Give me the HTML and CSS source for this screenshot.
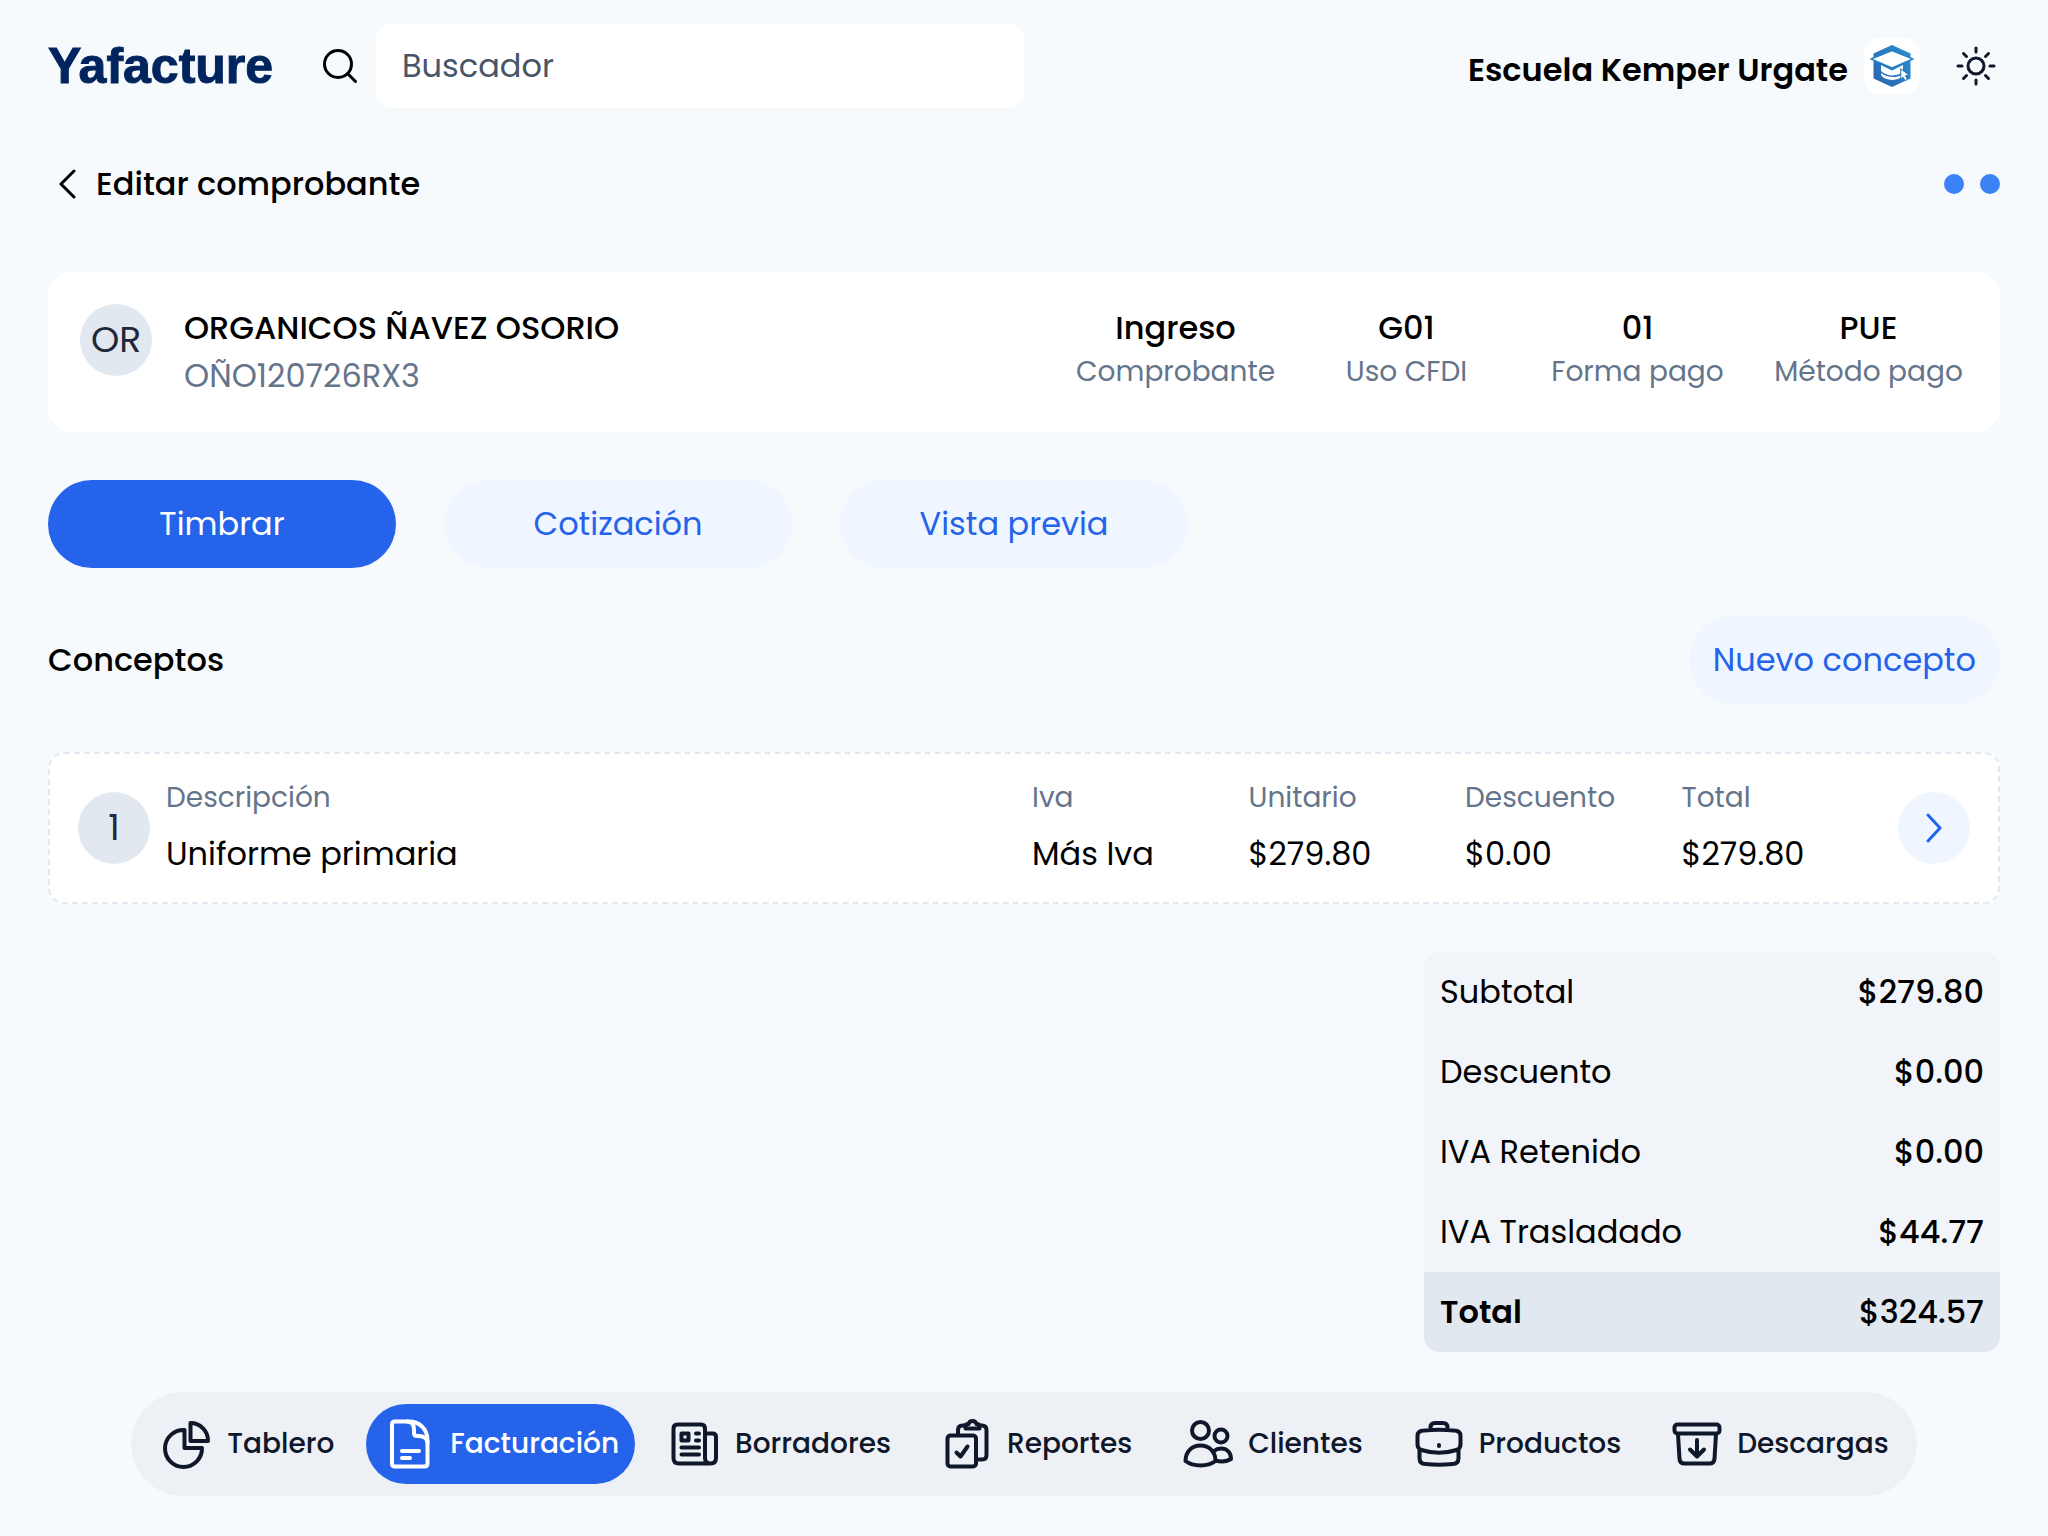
FILE: index.html
```html
<!DOCTYPE html>
<html lang="es">
<head>
<meta charset="utf-8">
<meta name="viewport" content="width=device-width, initial-scale=1">
<title>Yafacture</title>
<link rel="stylesheet" href="styles.css">
</head>
<body>
<header class="topbar">
  <a class="brand" href="#">Yafacture</a>
  <form class="search">
    <label class="search-label" for="q" aria-label="Buscador">
      <svg class="icon-search" viewBox="0 0 36 36"><circle cx="16" cy="16" r="13.5"/><path d="M26 26l7.500 7.500"/></svg>
    </label>
    <input class="search-input" id="q" type="text" placeholder="Buscador">
  </form>
  <div class="account">
    <span class="account-name">Escuela Kemper Urgate</span>
    <span class="account-logo">
      <svg viewBox="0 0 56 56">
        <defs><linearGradient id="hex" x1="1" y1="0" x2="0" y2="1"><stop offset="0" stop-color="#2793d1"/><stop offset="1" stop-color="#2a62ad"/></linearGradient></defs>
        <path fill="url(#hex)" d="M28 7l18.500 8.500v25L28 49 9.500 40.500v-25z"/>
        <path fill="#fff" stroke="#2a80c2" stroke-width="1.500" d="M28 12.500l21 8.500-21 9L7 21z"/>
        <path fill="#fff" d="M17 27l11 5.500L39 27v5l-2.500-1.500 1 4.500c-6 3.500-15 3.500-20.500-2z"/>
        <path fill="#fff" d="M17 35c6 5 15 5 21 2l1 1.500c-7 5-18 4.500-22-1.500z"/>
        <path fill="#fff" stroke="#2a76bb" stroke-width="1" d="M37 31l8 6-3.500.8 2 3.500-2.500 1.200-2-3.300-2 2z"/>
      </svg>
    </span>
    <button class="icon-button" type="button" aria-label="Tema">
      <svg class="icon-sun" viewBox="0 0 40 40"><circle cx="20" cy="20" r="8"/><path d="M20 2v4M20 34v4M2 20h4M34 20h4M7.500 7.500l3 3M29.500 29.500l3 3M7.500 32.500l3-3M29.500 10.500l3-3"/></svg>
    </button>
  </div>
</header>

<main class="content">
  <div class="page-head">
    <a class="back" href="#">
      <svg class="icon-back" viewBox="0 0 18 32"><path d="M16 3L3 16l13 13"/></svg>
      <h1 class="title">Editar comprobante</h1>
    </a>
    <button class="more" type="button" aria-label="Más opciones"><span class="dot"></span><span class="dot"></span></button>
  </div>

  <section class="client">
    <span class="badge">OR</span>
    <div class="client-id">
      <strong class="strong">ORGANICOS ÑAVEZ OSORIO</strong>
      <span class="rfc">OÑO120726RX3</span>
    </div>
    <div class="facts">
      <div class="fact"><strong class="strong">Ingreso</strong><span class="caption">Comprobante</span></div>
      <div class="fact"><strong class="strong">G01</strong><span class="caption">Uso CFDI</span></div>
      <div class="fact"><strong class="strong">01</strong><span class="caption">Forma pago</span></div>
      <div class="fact"><strong class="strong">PUE</strong><span class="caption">Método pago</span></div>
    </div>
  </section>

  <div class="actions">
    <button class="button button-wide button-primary" type="button">Timbrar</button>
    <button class="button button-wide" type="button">Cotización</button>
    <button class="button button-wide" type="button">Vista previa</button>
  </div>

  <div class="section-head">
    <h2 class="title">Conceptos</h2>
    <button class="button" type="button">Nuevo concepto</button>
  </div>

  <article class="concept">
    <span class="badge">1</span>
    <dl class="fields">
      <div class="field field-main"><dt class="caption">Descripción</dt><dd class="value">Uniforme primaria</dd></div>
      <div class="field"><dt class="caption">Iva</dt><dd class="value">Más Iva</dd></div>
      <div class="field"><dt class="caption">Unitario</dt><dd class="value">$279.80</dd></div>
      <div class="field"><dt class="caption">Descuento</dt><dd class="value">$0.00</dd></div>
      <div class="field"><dt class="caption">Total</dt><dd class="value">$279.80</dd></div>
    </dl>
    <button class="open" type="button" aria-label="Abrir concepto">
      <svg class="icon-open" viewBox="0 0 18 30"><path d="M3 2l12 13L3 28"/></svg>
    </button>
  </article>

  <table class="totals">
    <tbody>
      <tr><th scope="row">Subtotal</th><td>$279.80</td></tr>
      <tr><th scope="row">Descuento</th><td>$0.00</td></tr>
      <tr><th scope="row">IVA Retenido</th><td>$0.00</td></tr>
      <tr><th scope="row">IVA Trasladado</th><td>$44.77</td></tr>
    </tbody>
    <tfoot>
      <tr><th scope="row">Total</th><td>$324.57</td></tr>
    </tfoot>
  </table>
</main>

<nav class="dock">
  <a class="dock-item" href="#">
    <svg class="dock-icon" viewBox="0 0 48 48"><path d="M27.500 3V21H45A17.500 17.500 0 0 0 27.500 3z"/><path d="M21.500 10v18H39A18.500 18.500 0 1 1 21.500 10z"/></svg>
    Tablero</a>
  <a class="dock-item dock-item-active" href="#" aria-current="page">
    <svg class="dock-icon" viewBox="0 0 48 48"><path d="M9 1.500h14c11 0 18.500 8 18.500 19V43.500q0 3-3 3H9q-3 0-3-3v-39q0-3 3-3z"/><path d="M21 1.500c5 0 7 3 7 8V13q0 3 3 3h2c5 0 8.500 3 8.500 7M16 31h17M16 38h8"/></svg>
    Facturación</a>
  <a class="dock-item" href="#">
    <svg class="dock-icon" viewBox="0 0 48 48"><path d="M39.500 43.500H8Q2.500 43.500 2.500 38V8.500q0-4 4-4H30q4 0 4 4V38q0 5.500 5.500 5.500 5.500 0 5.500-5.500V17q0-3.500-3.500-3.500H34"/><path d="M10.500 13.500h7v7h-7zM25 13.500h3M25 20.500h3M10.500 27.500H28M10.500 34.500H28"/></svg>
    Borradores</a>
  <a class="dock-item" href="#">
    <svg class="dock-icon" viewBox="0 0 48 48"><rect x="4.500" y="15.500" width="28.500" height="31" rx="3"/><path d="M13.500 32.500l4 4 7-10M15 15V10q0-4.500 4.500-4.500h3M36 5.500h3q4.500 0 4.500 4.500v25q0 4.500-4.500 4.500h-6"/><path d="M22.500 8.500V6q0-2 3-2 1-3 4-3t4 3q3 0 3 2v2.500z"/></svg>
    Reportes</a>
  <a class="dock-item" href="#">
    <svg class="dock-icon" viewBox="0 0 48 48"><circle cx="16.500" cy="10.500" r="8.500"/><circle cx="37" cy="16" r="6.500"/><path d="M1.500 41c0-9 6-15.500 15-15.500S31.500 32 31.500 41c-8 6-22 6-30 0zM30 31q3-2.500 7-2.500c6 0 10 4 10 10.500-4 2.500-10 3-15.500 1.500"/></svg>
    Clientes</a>
  <a class="dock-item" href="#">
    <svg class="dock-icon" viewBox="0 0 48 48"><path d="M9 10.500q15-1.500 30 0 6.500 0 6.500 5.500v8.500q0 4-4 5.500-17.500 5.500-35 0-4-1.500-4-5.500V16q0-5.500 6.500-5.500zM15.500 10V7.500q0-4.500 4.500-4.500h8q4.500 0 4.500 4.500V10M4.500 30v8q0 6 6 6 13.500 1.500 27 0 6 0 6-6v-8M24 25v1"/></svg>
    Productos</a>
  <a class="dock-item" href="#">
    <svg class="dock-icon" viewBox="0 0 48 48"><rect x="1.500" y="4.500" width="45" height="9" rx="3"/><path d="M5 14l1.500 25q.5 4.500 5 4.500h25q4.500 0 5-4.500L43 14M24 20v16M17 29.500l7 7 7-7"/></svg>
    Descargas</a>
</nav>
</body>
</html>
```
FILE: styles.css
```css
* { box-sizing: border-box; }

body {
  margin: 0;
  min-height: 100vh;
  display: flex;
  flex-direction: column;
  background: #f7fafd;
  color: #000;
  font-family: Poppins, Inter, sans-serif;
  font-size: 32px;
  line-height: 48px;
}

a { color: inherit; text-decoration: none; }
button { font: inherit; color: inherit; border: 0; background: none; padding: 0; cursor: pointer; }
h1, h2, dl, dd { margin: 0; }
svg { display: block; fill: none; stroke-linecap: round; stroke-linejoin: round; }

.topbar {
  display: flex;
  align-items: center;
  padding: 24px 48px 0;
}
.brand {
  width: 224px;
  color: #00245d;
  font-family: "Liberation Sans", sans-serif;
  font-size: 50px;
  font-weight: 700;
  -webkit-text-stroke: 1px #00245d;
}
.search { display: flex; align-items: center; gap: 18px; margin-left: 50px; }
.icon-search { width: 36px; height: 36px; stroke: #000; stroke-width: 3; }
.search-input {
  width: 648px;
  height: 84px;
  padding: 0 26px;
  border: 0;
  border-radius: 16px;
  background: #fff;
  font: inherit;
  color: #475569;
}
.search-input::placeholder { color: #475569; opacity: 1; }
.account { display: flex; align-items: center; margin-left: auto; }
.account-name { padding-top: 8px; font-weight: 600; }
.account-logo {
  width: 56px;
  height: 56px;
  margin: 0 36px 0 16px;
  border-radius: 16px;
  background: #fff;
}
.icon-sun { width: 40px; height: 40px; margin-right: 4px; stroke: #0f172a; stroke-width: 3; }

.content {
  display: flex;
  flex-direction: column;
  gap: 48px;
  padding: 52px 48px 40px;
}
.page-head, .section-head { display: flex; align-items: center; justify-content: space-between; }
.page-head { margin-bottom: 16px; }
.back { display: flex; align-items: center; gap: 20px; padding-left: 10px; }
.icon-back { width: 18px; height: 32px; stroke: #000; stroke-width: 3; }
.title { font-size: 32px; font-weight: 500; }
.more { display: flex; gap: 16px; }
.dot { width: 20px; height: 20px; border-radius: 50%; background: #3b82f6; }

.strong { font-weight: 500; }
.caption { font-size: 28px; line-height: 40px; color: #64748b; }
.badge {
  flex: none;
  width: 72px;
  height: 72px;
  border-radius: 50%;
  background: #e2e8f0;
  color: #1e293b;
  font-size: 36px;
  line-height: 72px;
  text-align: center;
}

.client {
  display: flex;
  align-items: flex-start;
  gap: 32px;
  min-height: 160px;
  padding: 32px;
  border-radius: 24px;
  background: #fff;
}
.client-id, .fact { display: flex; flex-direction: column; }
.rfc { color: #64748b; }
.facts {
  display: grid;
  grid-template-columns: repeat(4, 199px);
  gap: 32px;
  margin-left: auto;
  text-align: center;
}

.actions { display: flex; gap: 48px; }
.button {
  height: 88px;
  padding: 0 24px;
  border-radius: 44px;
  background: #eff6ff;
  color: #2563eb;
}
.button-wide { width: 348px; }
.button-primary { background: #2563eb; color: #fff; }

.concept {
  display: flex;
  align-items: center;
  gap: 16px;
  padding: 24px 28px;
  border: 2px dashed #e2e8f0;
  border-radius: 16px;
  background: #fff;
}
.fields {
  flex: 1;
  display: grid;
  grid-template-columns: repeat(8, 1fr);
  gap: 16px;
}
.field { display: flex; flex-direction: column; gap: 12px; min-width: 0; }
.field-main { grid-column: span 4; }
.open {
  display: grid;
  place-items: center;
  width: 72px;
  height: 72px;
  border-radius: 50%;
  background: #eff6ff;
}
.icon-open { width: 18px; height: 30px; stroke: #2563eb; stroke-width: 3; }

.totals {
  align-self: flex-end;
  width: 576px;
  border-collapse: collapse;
  border-radius: 16px;
  overflow: hidden;
  background: #f1f4f9;
}
.totals th, .totals td { height: 80px; padding: 0 16px; }
.totals th { text-align: left; font-weight: 400; }
.totals td { text-align: right; font-weight: 500; }
.totals tfoot { background: #e2e8f0; }
.totals tfoot th { font-weight: 600; }

.dock {
  position: sticky;
  bottom: 40px;
  display: flex;
  align-self: center;
  gap: 16px;
  margin: auto 0 40px;
  padding: 12px;
  border-radius: 52px;
  background: #edf0f5;
  color: #0f172a;
}
.dock-item {
  display: flex;
  align-items: center;
  gap: 16px;
  height: 80px;
  padding: 0 16px 0 20px;
  border-radius: 40px;
  font-size: 28px;
  font-weight: 500;
}
.dock-item-active { background: #2563eb; color: #fff; }
.dock-icon { width: 48px; height: 48px; overflow: visible; stroke: currentColor; stroke-width: 4; }
```
